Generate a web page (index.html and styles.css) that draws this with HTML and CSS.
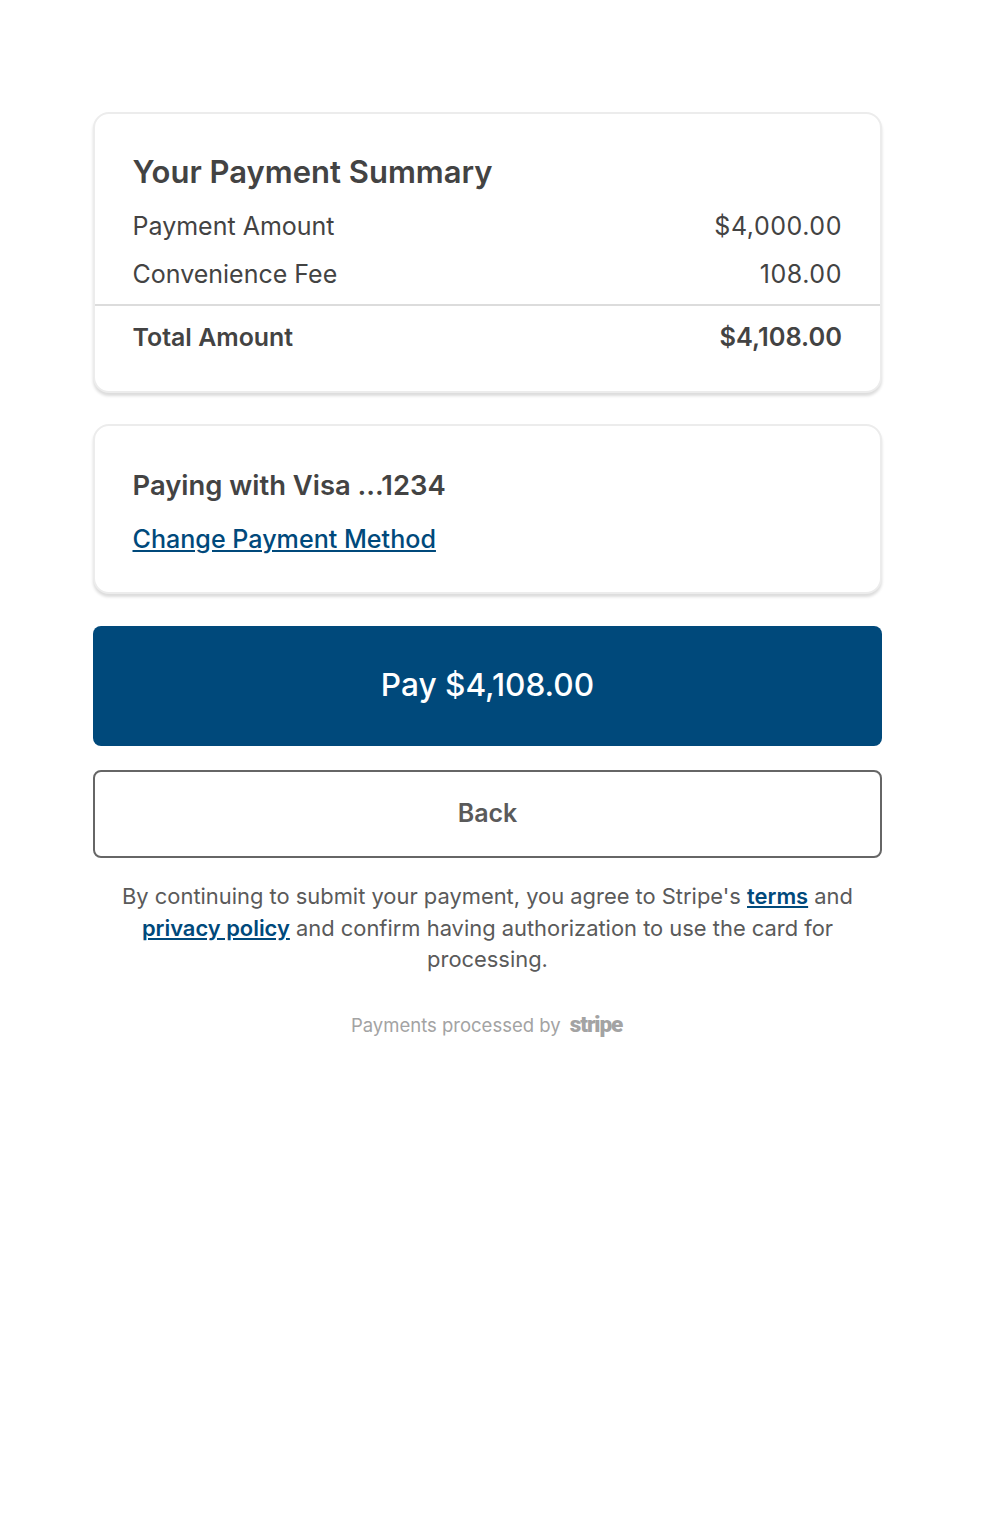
FILE: index.html
```html
<!DOCTYPE html>
<html>
<head>
  <title>Payment Summary</title>
  <link rel="stylesheet" href="styles.css">
</head>
<body>
  <div class="container">
    <div class="card summary-card">
      <h2 class="card-title">Your Payment Summary</h2>
      <div class="line-item">
        <span>Payment Amount</span>
        <span class="amount">$4,000.00</span>
      </div>
      <div class="line-item">
        <span>Convenience Fee</span>
        <span class="amount">108.00</span>
      </div>
      <div class="total-item">
        <span class="total-label">Total Amount</span>
        <span>$4,108.00</span>
      </div>
    </div>

    <div class="card method-card">
      <div class="method-title">Paying with Visa ...1234</div>
      <a class="method-link" href="#">Change Payment Method</a>
    </div>

    <button class="pay-button" type="button">Pay $4,108.00</button>
    <button class="back-button" type="button">Back</button>

    <p class="terms">By continuing to submit your payment, you agree to Stripe's <a href="#">terms</a> and <a href="#">privacy policy</a> and confirm having authorization to use the card for processing.</p>

    <div class="processed">Payments processed by <span class="stripe-logo">stripe</span></div>
  </div>
</body>
</html>
```

FILE: styles.css
```css
:root {
  --navy: #00497b;
  --text: #434343;
  --text-light: #5a5a5a;
}

* {
  margin: 0;
  padding: 0;
  box-sizing: border-box;
  font-family: Inter, "Noto Sans", sans-serif;
}

body {
  background: #fff;
  color: var(--text);
}

.container {
  display: flex;
  flex-direction: column;
  width: 789px;
  margin-left: 93px;
  padding-top: 112px;
}

.card {
  border: 2px solid #ececec;
  border-radius: 16px;
  background: #fff;
  box-shadow: 0 3px 3px rgba(0, 0, 0, 0.14);
}

.summary-card {
  height: 281px;
  padding-top: 38px;
}

.card-title {
  padding: 0 38px 0 37.5px;
  font-size: 31px;
  line-height: 40px;
  font-weight: 600;
  margin-bottom: 16px;
}

.line-item,
.total-item {
  display: flex;
  justify-content: space-between;
  padding: 0 38px 0 37.5px;
}

.line-item {
  font-size: 25px;
  line-height: 36px;
  margin-bottom: 12px;
  font-weight: 400;
}

.amount {
  letter-spacing: 0.55px;
}

.total-item {
  border-top: 2px solid #dcdcdc;
  padding-top: 13px;
  font-size: 25.4px;
  line-height: 36px;
  font-weight: 600;
}

.total-label {
  font-size: 24.9px;
}

.method-card {
  height: 170px;
  margin-top: 31px;
  padding: 39px 38px 0 37.5px;
}

.method-title {
  font-size: 27.4px;
  line-height: 40px;
  font-weight: 600;
  margin-bottom: 16px;
}

.method-link {
  font-size: 25.1px;
  line-height: 36px;
  font-weight: 500;
  color: var(--navy);
}

.pay-button {
  height: 120px;
  margin-top: 32px;
  padding-bottom: 4px;
  border: none;
  border-radius: 8px;
  background: var(--navy);
  color: #fff;
  font-size: 31.6px;
  font-weight: 500;
}

.back-button {
  height: 88px;
  margin-top: 24px;
  padding-bottom: 2px;
  border: 2px solid #666;
  border-radius: 8px;
  background: #fff;
  color: var(--text-light);
  font-size: 25px;
  font-weight: 600;
}

.terms {
  margin-top: 23px;
  padding: 0 20px;
  text-align: center;
  font-size: 21.9px;
  line-height: 31.5px;
  color: var(--text-light);
}

.terms a {
  color: var(--navy);
  font-weight: 600;
}

.processed {
  margin-top: 32px;
  text-align: center;
  font-size: 18.5px;
  line-height: 32px;
  color: #a3a3a3;
  padding-right: 2px;
}

.stripe-logo {
  margin-left: 4px;
  font-family: Roboto, sans-serif;
  font-size: 22.5px;
  font-weight: 900;
  letter-spacing: -1.1px;
}
```
